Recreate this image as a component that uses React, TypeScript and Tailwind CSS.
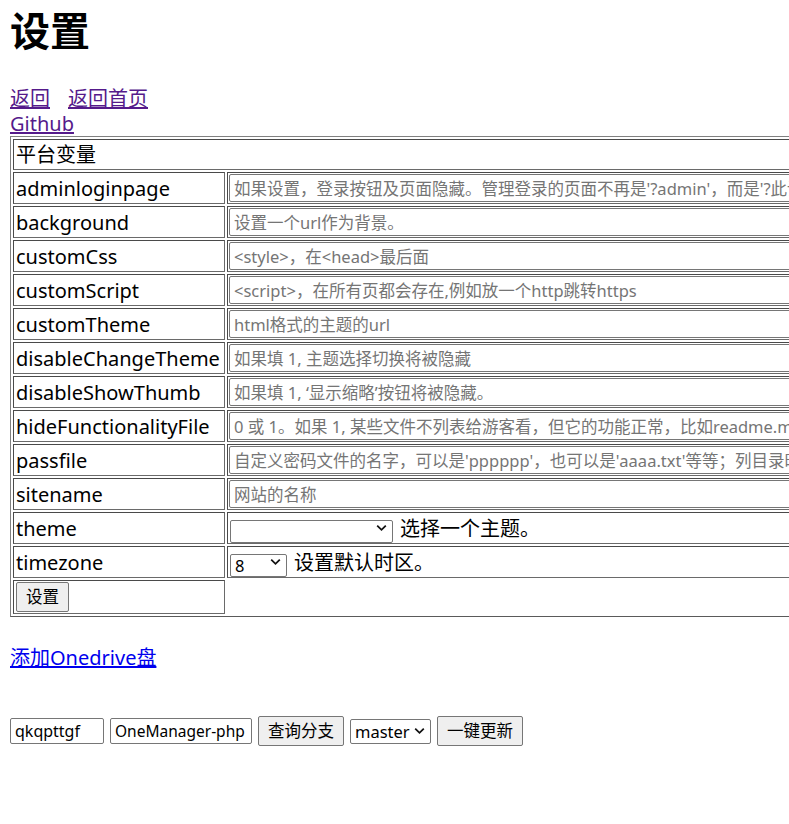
import React from 'react';

const rows: { name: string; hint: string }[] = [
  { name: 'adminloginpage', hint: "如果设置，登录按钮及页面隐藏。管理登录的页面不再是'?admin'，而是'?此设置的值'。" },
  { name: 'background', hint: '设置一个url作为背景。' },
  { name: 'customCss', hint: '<style>，在<head>最后面' },
  { name: 'customScript', hint: '<script>，在所有页都会存在,例如放一个http跳转https' },
  { name: 'customTheme', hint: 'html格式的主题的url' },
  { name: 'disableChangeTheme', hint: '如果填 1, 主题选择切换将被隐藏' },
  { name: 'disableShowThumb', hint: '如果填 1, ‘显示缩略’按钮将被隐藏。' },
  { name: 'hideFunctionalityFile', hint: '0 或 1。如果 1, 某些文件不列表给游客看，但它的功能正常，比如readme.md与head.md。' },
  { name: 'passfile', hint: "自定义密码文件的名字，可以是'pppppp'，也可以是'aaaa.txt'等等；列目录时不会显示，只有知道密码才能查看或下载此文件。" },
  { name: 'sitename', hint: '网站的名称' },
];

const Chevron = () => (
  <svg width="11" height="7" viewBox="0 0 11 7" className="pointer-events-none absolute right-[6px] top-1/2 -translate-y-1/2">
    <path d="M1.2 1.2 5.5 5.3 9.8 1.2" fill="none" stroke="#111" strokeWidth="1.8" />
  </svg>
);

const Select: React.FC<{ width: string; value: string; options: string[] }> = ({ width, value, options }) => (
  <div className={`relative ${width}`}>
    <select
      defaultValue={value}
      className="w-full h-full appearance-none bg-white border border-[#767676] rounded-[2px] pl-[4px] text-[16.5px] leading-[21px] text-black"
    >
      {options.map((o) => (
        <option key={o} value={o}>{o}</option>
      ))}
    </select>
    <Chevron />
  </div>
);

const cell = 'border border-[#6a6a6a] border-t-[#4a4a4a] border-l-[#4a4a4a] p-px';

export default function App() {
  return (
    <div className="w-[789px] h-[824px] overflow-hidden bg-white text-black pl-[10px] font-['Noto_Sans','Noto_Sans_CJK_SC',sans-serif]">
      <h1 className="pt-[11px] text-[40px] leading-[40px] font-bold">设置</h1>

      <div className="mt-[35px] text-[20px]">
        <div className="leading-[26px]">
          <a href="#" className="text-[#551a8b] underline">返回</a>
          <a href="#" className="ml-[18px] text-[#551a8b] underline">返回首页</a>
        </div>
        <div className="leading-[24px]">
          <a href="#" className="text-[#551a8b] underline">Github</a>
        </div>
      </div>

      {/* settings table */}
      <div className="w-[1100px] border border-[#808080] border-b-[#5a5a5a] border-r-[#5a5a5a] p-[2px] grid grid-cols-[212px_1fr] gap-[2px]">
        <div className={`${cell} col-span-2 pl-[2px] text-[20px] leading-[27px]`}>平台变量</div>

        {rows.map((r) => (
          <React.Fragment key={r.name}>
            <div className={`${cell} pl-[2px] h-[32px] flex items-center text-[20px] leading-[27px]`}>{r.name}</div>
            <div className={cell}>
              <input
                type="text"
                placeholder={r.hint}
                className="block w-full h-[28px] border border-[#767676] rounded-[2px] px-[4px] text-[16.5px] placeholder:text-[#757575]"
              />
            </div>
          </React.Fragment>
        ))}

        <div className={`${cell} pl-[2px] h-[32px] flex items-center text-[20px] leading-[27px]`}>theme</div>
        <div className={`${cell} flex items-center gap-[7px] text-[20px] leading-[27px]`}>
          <div className="ml-px h-[23px] flex">
            <Select width="w-[163px]" value="" options={['', 'classic.html', 'nexmoe.html', 'rain.html']} />
          </div>
          <span>选择一个主题。</span>
        </div>

        <div className={`${cell} pl-[2px] h-[32px] flex items-center text-[20px] leading-[27px]`}>timezone</div>
        <div className={`${cell} flex items-center gap-[7px] text-[20px] leading-[27px]`}>
          <div className="ml-px h-[23px] flex">
            <Select width="w-[57px]" value="8" options={['-12', '0', '8', '12']} />
          </div>
          <span>设置默认时区。</span>
        </div>

        <div className={cell}>
          <button className="ml-px w-[53px] h-[30px] bg-[#efefef] border border-[#767676] rounded-[2px] text-[16.5px]">设置</button>
        </div>
        <div />
      </div>

      <div className="mt-[28px] text-[20px] leading-[26px]">
        <a href="#" className="text-[#0000ee] underline">添加Onedrive盘</a>
      </div>

      <div className="mt-[45px] h-[30px] flex items-center gap-[6px] text-[16.5px]">
        <input
          type="text"
          defaultValue="qkqpttgf"
          className="w-[94px] h-[26px] border border-[#767676] rounded-[2px] px-[4px] text-[16px]"
        />
        <input
          type="text"
          defaultValue="OneManager-php"
          className="w-[142px] h-[26px] border border-[#767676] rounded-[2px] px-[4px] text-[15.5px]"
        />
        <button className="w-[86px] h-[30px] bg-[#efefef] border border-[#767676] rounded-[2px]">查询分支</button>
        <div className="h-[25px] flex">
          <Select width="w-[81px]" value="master" options={['master', 'dev']} />
        </div>
        <button className="w-[86px] h-[30px] bg-[#efefef] border border-[#767676] rounded-[2px]">一键更新</button>
      </div>
    </div>
  );
}
